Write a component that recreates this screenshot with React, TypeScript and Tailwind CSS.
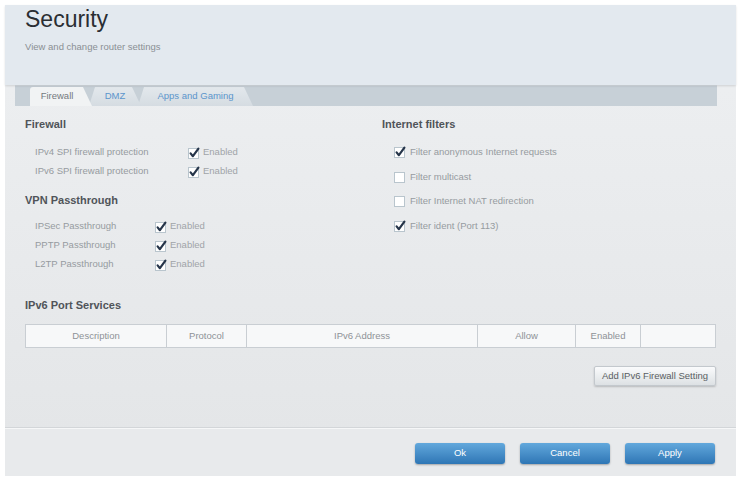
import React from 'react';

const font = { fontFamily: '"Liberation Sans", Arial, sans-serif' };

function Check({ checked }: { checked: boolean }) {
  return (
    <svg width="13" height="12" viewBox="0 0 13 12" className="shrink-0">
      <rect x="0.5" y="1.5" width="10" height="10" fill="#ffffff" stroke="#b9c5cd" />
      {checked && (
        <path d="M2.6 6.4 L4.9 9.2 L10.4 1.6" fill="none" stroke="#26354a" strokeWidth="2.2" strokeLinecap="round" strokeLinejoin="round" />
      )}
    </svg>
  );
}

function Row({ label, width, checked = true }: { label: string; width: string; checked?: boolean }) {
  return (
    <div className="flex items-center h-[19px] pl-[10px]">
      <div className={`${width} text-[9.5px] text-[#969ba0]`}>{label}</div>
      <Check checked={checked} />
      <span className="ml-[2px] text-[9.5px] text-[#a0a4a8]">Enabled</span>
    </div>
  );
}

function Filter({ label, checked }: { label: string; checked: boolean }) {
  return (
    <div className="flex items-center h-[24.5px] pl-[12px] gap-[3px]">
      <Check checked={checked} />
      <span className="text-[9.5px] text-[#969ba0]">{label}</span>
    </div>
  );
}

const COLS: { label: string; w: string }[] = [
  { label: 'Description', w: 'w-[141px]' },
  { label: 'Protocol', w: 'w-[80px]' },
  { label: 'IPv6 Address', w: 'w-[231px]' },
  { label: 'Allow', w: 'w-[98px]' },
  { label: 'Enabled', w: 'w-[65px]' },
  { label: '', w: 'flex-1' }
];

export default function App() {
  return (
    <div className="w-[740px] h-[478px] bg-white pt-[5px] pl-[5px] pr-[4px] pb-[2px]" style={font}>
      <div className="flex flex-col h-full bg-linear-to-b from-[#eef0f2] to-[#e3e5e7]">
        {/* header */}
        <div className="h-[80px] bg-[#e3e9ef] px-[20px] shadow-[0_1px_2px_rgba(0,0,0,0.12)] relative z-10">
          <div className="text-[23px] leading-[28px] text-[#2a2e33]">Security</div>
          <div className="mt-[8px] text-[9.5px] leading-[12px] text-[#8a8f94]">View and change router settings</div>
        </div>

        {/* tab strip */}
        <div className="ml-[10px] mr-[19px] h-[21px] bg-[#c7d0d7] border-t border-[#d6dde2] flex items-end pl-[15px]">
          <div className="relative z-10 h-[19px] w-[62px] bg-[#f1f3f4] rounded-tl-[3px] flex items-center justify-center pr-[8px] text-[9.5px] text-[#74797e] [clip-path:polygon(0_100%,0_0,calc(100%-9px)_0,100%_100%)]">
            Firewall
          </div>
          <div className="-ml-[3px] h-[19px] w-[52px] bg-linear-to-b from-[#e3e8ec] to-[#d5dce2] flex items-center justify-center text-[9.5px] text-[#5b95cc] [clip-path:polygon(0_100%,6px_0,calc(100%-9px)_0,100%_100%)]">
            DMZ
          </div>
          <div className="-ml-[3px] h-[19px] w-[115px] bg-linear-to-b from-[#e3e8ec] to-[#d5dce2] flex items-center justify-center text-[9.5px] text-[#5b95cc] [clip-path:polygon(0_100%,6px_0,calc(100%-9px)_0,100%_100%)]">
            Apps and Gaming
          </div>
        </div>

        {/* columns */}
        <div className="flex pl-[20px]">
          <div className="w-[357px]">
            <div className="mt-[11px] h-[14px] leading-[14px] text-[11px] font-bold text-[#505459]">Firewall</div>
            <div className="mt-[12px]">
              <Row label="IPv4 SPI firewall protection" width="w-[153px]" />
              <Row label="IPv6 SPI firewall protection" width="w-[153px]" />
            </div>
            <div className="mt-[12px] h-[14px] leading-[14px] text-[11px] font-bold text-[#505459]">VPN Passthrough</div>
            <div className="mt-[10px]">
              <Row label="IPSec Passthrough" width="w-[120px]" />
              <Row label="PPTP Passthrough" width="w-[120px]" />
              <Row label="L2TP Passthrough" width="w-[120px]" />
            </div>
          </div>
          <div className="flex-1">
            <div className="mt-[11px] h-[14px] leading-[14px] text-[11px] font-bold text-[#505459]">Internet filters</div>
            <div className="mt-[9px]">
              <Filter label="Filter anonymous Internet requests" checked />
              <Filter label="Filter multicast" checked={false} />
              <Filter label="Filter Internet NAT redirection" checked={false} />
              <Filter label="Filter ident (Port 113)" checked />
            </div>
          </div>
        </div>

        {/* IPv6 port services */}
        <div className="pl-[20px] pr-[20px]">
          <div className="mt-[24px] h-[14px] leading-[14px] text-[11px] font-bold text-[#505459]">IPv6 Port Services</div>
          <div className="mt-[12px] h-[24px] flex border border-[#c9ced3] bg-[#f7f8f9]">
            {COLS.map((c, i) => (
              <div
                key={i}
                className={`${c.w} flex items-center justify-center text-[9.5px] text-[#8e9297] ${i < COLS.length - 1 ? 'border-r border-[#c9ced3]' : ''}`}
              >
                {c.label}
              </div>
            ))}
          </div>
          <div className="mt-[18px] flex justify-end">
            <button className="h-[20px] w-[122px] rounded-[2px] border border-[#c3c8cd] bg-linear-to-b from-[#fafbfc] to-[#dde1e4] shadow-[0_1px_2px_rgba(0,0,0,0.2)] text-[9.5px] text-[#5a5e63]">
              Add IPv6 Firewall Setting
            </button>
          </div>
        </div>

        <div className="flex-1" />

        {/* footer */}
        <div className="h-[48px] border-t border-[#f6f7f8] shadow-[0_-1px_0_#d3d6d9] bg-[#e8eaec] flex justify-end items-start pt-[14px] pr-[21px] gap-[15px]">
          {['Ok', 'Cancel', 'Apply'].map((b) => (
            <button
              key={b}
              className="h-[21px] w-[90px] rounded-[3px] bg-linear-to-b from-[#62a8dc] to-[#2e76b5] shadow-[0_1px_2px_rgba(0,0,0,0.3)] text-[9.5px] text-white"
            >
              {b}
            </button>
          ))}
        </div>
      </div>
    </div>
  );
}
